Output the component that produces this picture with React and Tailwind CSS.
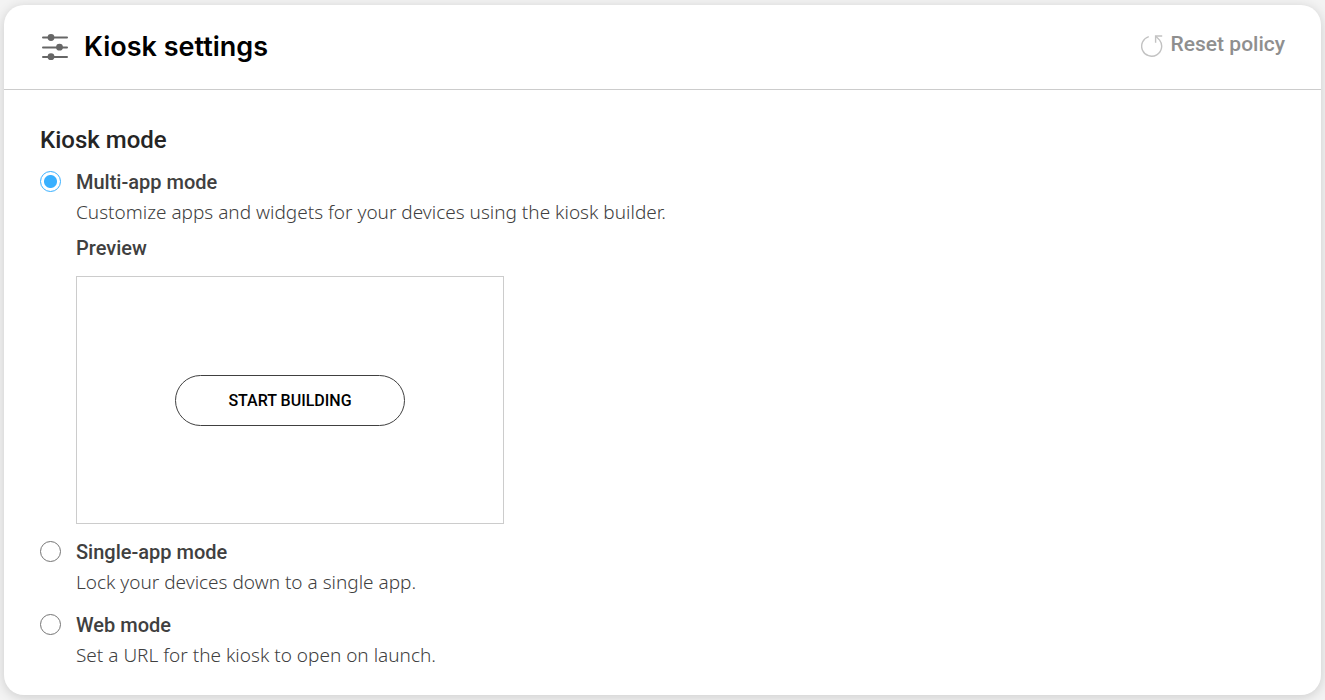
import { useState } from 'react';

const SlidersIcon = () => (
    <svg width="28" height="28" viewBox="0 0 28 28" fill="none" stroke="#666666" strokeWidth="2" strokeLinecap="round" aria-hidden="true">
        <path d="M3 4.5h24M3 14.5h24M3 24h24" />
        <g fill="#666666" stroke="none">
            <circle cx="11" cy="4.5" r="3.4" />
            <circle cx="19.5" cy="14.2" r="3.4" />
            <circle cx="11" cy="23.7" r="3.4" />
        </g>
    </svg>
);

const ResetIcon = () => (
    <svg width="22" height="22" viewBox="0 0 22 22" fill="none" stroke="#c2c2c2" strokeWidth="1.4" aria-hidden="true">
        <path d="M7.8 1.6A10 10 0 1 0 18.6 5.1L14.8 1.3" />
        <path d="M21.2 1H14.6V7.8" />
    </svg>
);

const ModeOption = ({ id, title, description, checked, onChange, children }) => {
    return (
        <div className="flex items-start gap-[15px]">
            <input
                type="radio"
                id={id}
                name="kiosk-mode"
                checked={checked}
                onChange={onChange}
                aria-describedby={`${id}-description`}
                className="mt-1 size-[21px] shrink-0 appearance-none rounded-full border border-[#757575] bg-white checked:border-[#38b0ff] checked:bg-[radial-gradient(circle,#38b0ff_6px,white_7px)]"
            />
            <div className="min-w-0">
                <label htmlFor={id} className="block text-xl leading-[30px] font-medium">
                    {title}
                </label>
                <p id={`${id}-description`} className="font-['Noto_Sans',sans-serif] text-[19px] leading-[30px] font-light">
                    {description}
                </p>
                {children}
            </div>
        </div>
    );
};

const App = () => {
    const [mode, setMode] = useState('multi');

    return (
        <main className="bg-[#f3f3f3] px-1 py-[5px] font-['Roboto',sans-serif] text-[#404040]">
            <section className="rounded-[20px] bg-white shadow-[0_2px_12px_rgba(0,0,0,0.16)]">
                <header className="flex items-center justify-between border-b border-[#cccccc] px-9 py-6">
                    <div className="flex items-center gap-4">
                        <SlidersIcon />
                        <h1 className="font-['Inter',sans-serif] text-[27px] leading-9 font-semibold text-black">Kiosk settings</h1>
                    </div>
                    <button type="button" className="mb-1.5 flex items-center gap-2 text-[21px] leading-7 font-medium text-[#8f8f8f]">
                        <span className="mt-1">
                            <ResetIcon />
                        </span>
                        Reset policy
                    </button>
                </header>

                <div className="px-9 pt-[35px] pb-[25px]">
                    <h2 id="kiosk-mode-title" className="text-2xl leading-[30px] font-medium text-[#252525]">
                        Kiosk mode
                    </h2>

                    {/* Modes */}
                    <div role="radiogroup" aria-labelledby="kiosk-mode-title" className="mt-3 flex flex-col gap-[13px]">
                        <ModeOption
                            id="multi"
                            title="Multi-app mode"
                            description="Customize apps and widgets for your devices using the kiosk builder."
                            checked={mode === 'multi'}
                            onChange={() => setMode('multi')}
                        >
                            <h3 className="mt-1.5 text-xl leading-[30px] font-medium">Preview</h3>
                            <div className="mt-[13px] flex aspect-[428/248] w-full max-w-[428px] items-center justify-center border border-[#cccccc]">
                                <button type="button" className="rounded-full border border-[#404040] px-[52px] py-3 text-base leading-[25px] font-medium text-black">
                                    START BUILDING
                                </button>
                            </div>
                        </ModeOption>
                        <ModeOption
                            id="single"
                            title="Single-app mode"
                            description="Lock your devices down to a single app."
                            checked={mode === 'single'}
                            onChange={() => setMode('single')}
                        />
                        <ModeOption
                            id="web"
                            title="Web mode"
                            description="Set a URL for the kiosk to open on launch."
                            checked={mode === 'web'}
                            onChange={() => setMode('web')}
                        />
                    </div>
                </div>
            </section>
        </main>
    );
};

export default App;
